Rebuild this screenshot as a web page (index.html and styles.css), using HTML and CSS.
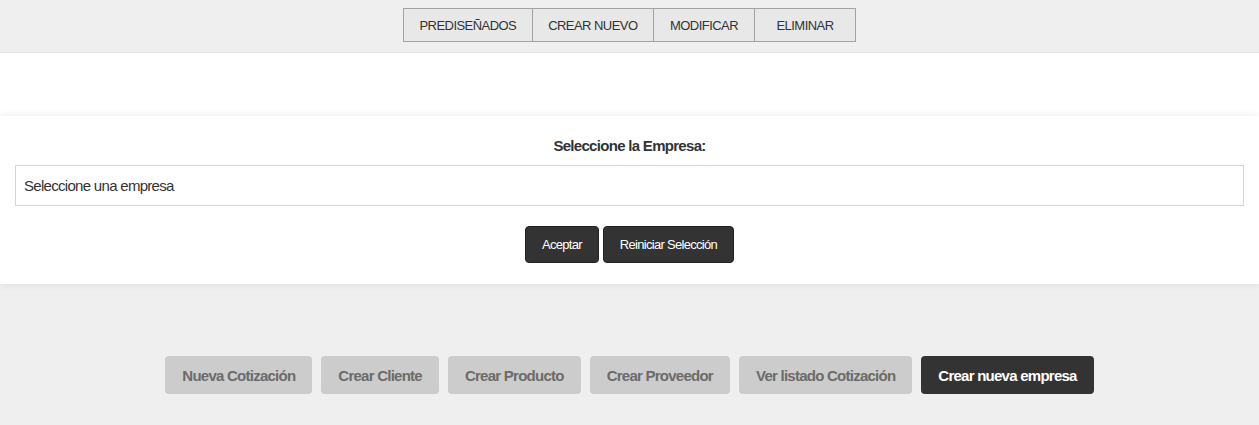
FILE: index.html
```html
<!DOCTYPE html>
<html lang="es">
<head>
<meta charset="utf-8">
<title>Empresas</title>
<link rel="stylesheet" href="styles.css">
</head>
<body>
<header class="topbar">
  <nav class="tabs">
    <a class="tab" href="#">PREDISEÑADOS</a>
    <a class="tab" href="#">CREAR NUEVO</a>
    <a class="tab" href="#">MODIFICAR</a>
    <a class="tab" href="#">ELIMINAR</a>
  </nav>
</header>
<div class="spacer"></div>
<section class="card">
  <h2 class="card-title">Seleccione la Empresa:</h2>
  <div class="select-box">Seleccione una empresa</div>
  <div class="card-actions">
    <button class="btn-dark">Aceptar</button>
    <button class="btn-dark">Reiniciar Selección</button>
  </div>
</section>
<section class="actions">
  <button class="btn-grey">Nueva Cotización</button>
  <button class="btn-grey">Crear Cliente</button>
  <button class="btn-grey">Crear Producto</button>
  <button class="btn-grey">Crear Proveedor</button>
  <button class="btn-grey">Ver listado Cotización</button>
  <button class="btn-black">Crear nueva empresa</button>
</section>
</body>
</html>
```

FILE: styles.css
```css
* { box-sizing: border-box; }
html, body {
  margin: 0;
  padding: 0;
  background: #efefef;
  font-family: "Liberation Sans", Arial, sans-serif;
  color: #333;
}
.topbar {
  height: 53px;
  background: #efefef;
  border-bottom: 1px solid #e4e4e4;
  padding-top: 8px;
  display: flex;
  justify-content: center;
  align-items: flex-start;
}
.tabs {
  display: flex;
}
.tab {
  display: flex;
  align-items: center;
  justify-content: center;
  height: 34px;
  min-width: 102px;
  padding: 0 15.5px;
  background: #e8e8e8;
  border: 1px solid #a3a3a3;
  margin-left: -1px;
  color: #333;
  text-decoration: none;
  font-size: 13px;
  letter-spacing: -0.55px;
}
.tab:first-child { margin-left: 0; }
.spacer {
  height: 63px;
  background: #fff;
}
.card {
  background: #fff;
  padding: 20px 15px 21px 15px;
  box-shadow: 0 0 8px rgba(0, 0, 0, 0.09);
  position: relative;
}
.card-title {
  margin: 0 0 9px 0;
  text-align: center;
  font-size: 15px;
  letter-spacing: -0.7px;
  line-height: 20px;
  font-weight: bold;
  color: #333;
}
.select-box {
  height: 41px;
  border: 1px solid #d5d5d5;
  padding: 0 8px;
  display: flex;
  align-items: center;
  font-size: 15px;
  letter-spacing: -0.7px;
  color: #333;
  background: #fff;
}
.card-actions {
  margin-top: 20px;
  display: flex;
  justify-content: center;
  gap: 4px;
}
.btn-dark {
  height: 37px;
  padding: 0 16px;
  border: 1px solid #222;
  border-radius: 4px;
  background: #333;
  color: #fff;
  font-family: inherit;
  font-size: 13px;
  letter-spacing: -0.7px;
}
.actions {
  padding-top: 72px;
  height: 142px;
  display: flex;
  justify-content: center;
  align-items: flex-start;
  gap: 9px;
}
.btn-grey, .btn-black {
  height: 38px;
  padding: 0 17px;
  border: none;
  border-radius: 4px;
  font-family: inherit;
  font-size: 15px;
  letter-spacing: -0.75px;
  font-weight: bold;
}
.btn-grey {
  background: #cccccc;
  color: #6b6b6b;
}
.btn-black {
  background: #333;
  color: #fff;
}
```
